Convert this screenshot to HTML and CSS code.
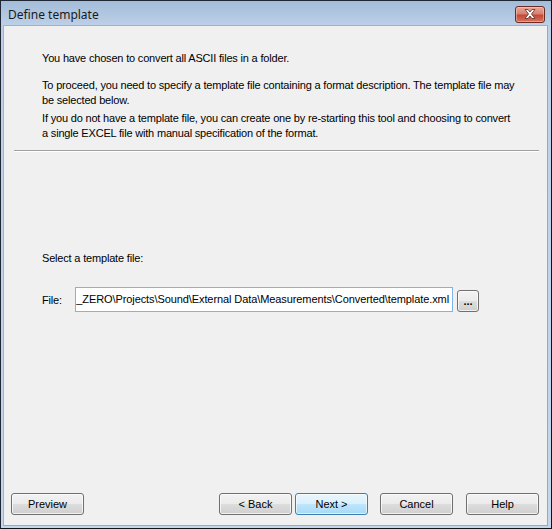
FILE: index.html
```html
<!DOCTYPE html>
<html lang="en">
<head>
  <meta charset="UTF-8" />
  <title>Define template</title>
  <link rel="stylesheet" href="styles.css">
</head>
<body>
  <div class="window">
    <div class="titlebar">
      <span class="title">Define template</span>
      <button class="close" title="Close">
        <svg width="16" height="12" viewBox="0 0 16 12">
          <path d="M3 1.5h3l2 2.5 2-2.5h3l-3.5 4.5 3.5 4.5h-3l-2-2.5-2 2.5h-3l3.5-4.5z" fill="#fff" stroke="#6b3a33" stroke-width="0.9" stroke-linejoin="round"/>
        </svg>
      </button>
    </div>

    <div class="content">
      <div class="intro">
        <p class="first">You have chosen to convert all ASCII files in a folder.</p>
        <p class="second">To proceed, you need to specify a template file containing a format description. The template file may be selected below.</p>
        <p class="third">If you do not have a template file, you can create one by re-starting this tool and choosing to convert a single EXCEL file with manual specification of the format.</p>
      </div>
      <div class="separator"></div>

      <div class="main">
        <p class="select-label">Select a template file:</p>
        <div class="file-row">
          <label class="file-label">File:</label>
          <div class="textbox">_ZERO\Projects\Sound\External Data\Measurements\Converted\template.xml</div>
          <button class="btn browse">...</button>
        </div>
      </div>

      <div class="footer">
        <button class="btn">Preview</button>
        <div class="spacer"></div>
        <button class="btn">&lt; Back</button>
        <button class="btn default next">Next &gt;</button>
        <button class="btn cancel">Cancel</button>
        <button class="btn help">Help</button>
      </div>
    </div>
  </div>
</body>
</html>
```

FILE: styles.css
```css
body {
  margin: 0;
  font-family: 'Liberation Sans', Arial, sans-serif;
  font-size: 11px;
  letter-spacing: -0.18px;
  color: #000;
  background: #fff;
}
.window {
  width: 552px;
  height: 529px;
  box-sizing: border-box;
  border: 1px solid #1e2733;
  border-right-color: #101418;
  border-bottom-color: #101418;
  background: linear-gradient(to bottom, #a3bcd8 0, #bcd0e7 24px, #c4d6ea 100%);
  display: flex;
  flex-direction: column;
  padding: 0 3px 2px 2px;
}
.titlebar {
  height: 24px;
  display: flex;
  align-items: center;
  justify-content: space-between;
  flex-shrink: 0;
}
.title {
  font-family: 'Noto Sans', 'Open Sans', sans-serif;
  font-size: 12px;
  letter-spacing: 0;
  color: #1a1a1a;
  padding-left: 5px;
  padding-top: 2px;
}
.close {
  width: 30px;
  height: 17px;
  margin-top: 2px;
  margin-right: 3px;
  padding: 0;
  border: 1px solid #6b2a22;
  border-radius: 3px;
  background: linear-gradient(to bottom, #e7a898 0, #d98170 45%, #c24a36 55%, #d8735c 100%);
  display: flex;
  align-items: center;
  justify-content: center;
  box-shadow: inset 0 0 0 1px rgba(255, 220, 210, 0.45);
}
.content {
  flex: 1;
  background: #f0f0f0;
  border: 1px solid #9fb3cb;
  border-right-color: #5cbdf0;
  border-bottom-color: #5cbdf0;
  display: flex;
  flex-direction: column;
}
p {
  margin: 0;
  line-height: 15px;
}
.intro {
  padding: 25px 30px 0 38px;
}
.second {
  margin-top: 12px;
}
.third {
  margin-top: 3px;
}
.separator {
  margin: 9px 8px 0 10px;
  border-top: 1px solid #a0a0a0;
  border-bottom: 1px solid #ffffff;
}
.main {
  padding: 99px 0 0 38px;
}
.file-row {
  display: flex;
  align-items: center;
  margin-top: 20px;
}
.file-label {
  width: 33px;
  padding-top: 2px;
}
.textbox {
  width: 373px;
  height: 23px;
  line-height: 23px;
  border: 1px solid #7eb4ea;
  background: #fff;
  text-align: right;
  letter-spacing: -0.09px;
  overflow: hidden;
  white-space: nowrap;
  padding-right: 3px;
  box-sizing: content-box;
}
.btn {
  font-family: 'Liberation Sans', Arial, sans-serif;
  font-size: 11px;
  color: #000;
  width: 73px;
  height: 22px;
  padding: 0;
  border: 1px solid #707070;
  border-radius: 3px;
  background: linear-gradient(to bottom, #f2f2f2 0, #ebebeb 50%, #dddddd 51%, #cfcfcf 100%);
  box-shadow: inset 0 0 0 1px rgba(255, 255, 255, 0.7);
}
.browse {
  width: 22px;
  height: 22px;
  margin-left: 4px;
  margin-top: 4px;
  font-weight: bold;
  line-height: 12px;
}
.footer {
  margin-top: auto;
  display: flex;
  padding: 0 8px 10px 7px;
}
.spacer {
  flex: 1;
}
.btn.default {
  border-color: #3c7fb1;
  background: linear-gradient(to bottom, #eaf6fd 0, #d9f0fc 50%, #bee6fd 51%, #a7d9f5 100%);
  box-shadow: inset 0 0 0 1px rgba(255, 255, 255, 0.6);
}
.next {
  margin-left: 3px;
}
.cancel {
  margin-left: 12px;
}
.help {
  margin-left: 13px;
}
```
